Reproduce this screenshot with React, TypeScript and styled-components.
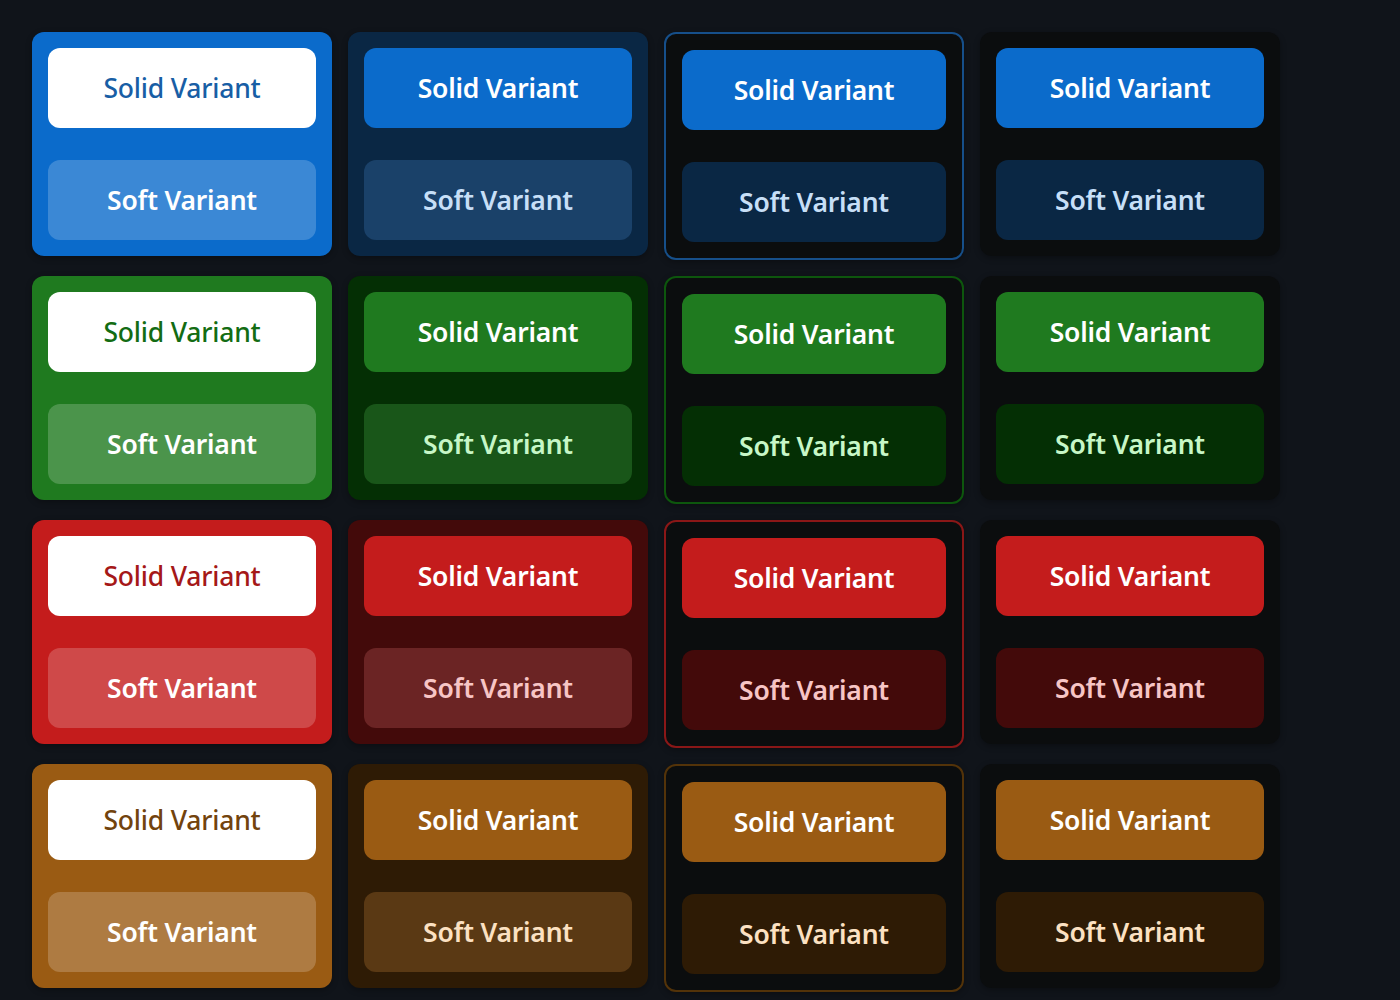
import React from 'react';
import styled, { createGlobalStyle, css } from 'styled-components';

type CardVariant = 'solid' | 'soft' | 'outlined' | 'plain';

interface Palette {
  name: string;
  main: string;
  dark: string;
  deep: string;
  border: string;
  softRaised: string;
  softText: string;
}

const palettes: Palette[] = [
  { name: 'primary', main: '#0b6bcb', dark: '#185ea5', deep: '#0a2744', border: '#164f8a', softRaised: '#1a4169', softText: '#c7dff7' },
  { name: 'success', main: '#1f7a1f', dark: '#136c13', deep: '#042f04', border: '#0d560d', softRaised: '#195619', softText: '#c7f7c7' },
  { name: 'danger', main: '#c41c1c', dark: '#a51818', deep: '#430a0a', border: '#8a1717', softRaised: '#6b2424', softText: '#f7c5c5' },
  { name: 'warning', main: '#9a5b13', dark: '#72430d', deep: '#2e1b05', border: '#533309', softRaised: '#5a3914', softText: '#fce1c2' },
];

const variants: CardVariant[] = ['solid', 'soft', 'outlined', 'plain'];

const GlobalStyle = createGlobalStyle`
  html, body {
    margin: 0;
    background: #10141a;
    font-family: "Noto Sans", "Open Sans", sans-serif;
  }
  * { box-sizing: border-box; }
`;

const Page = styled.div`
  padding: 32px;
  min-height: 1000px;
`;

const Grid = styled.div`
  display: grid;
  grid-template-columns: repeat(4, 300px);
  gap: 16px;
  align-items: start;
`;

const Card = styled.div<{ $variant: CardVariant; $p: Palette }>`
  display: flex;
  flex-direction: column;
  gap: 32px;
  padding: 16px;
  border-radius: 12px;
  box-shadow: 0 2px 6px rgba(0, 0, 0, 0.3);
  ${({ $variant, $p }) => {
    switch ($variant) {
      case 'solid':
        return css`background: ${$p.main};`;
      case 'soft':
        return css`background: ${$p.deep};`;
      case 'outlined':
        return css`
          background: #0b0d0e;
          border: 2px solid ${$p.border};
        `;
      default:
        return css`background: #0b0d0e;`;
    }
  }}
`;

const Button = styled.button<{ $kind: 'solid' | 'soft'; $card: CardVariant; $p: Palette }>`
  height: 80px;
  width: 100%;
  padding: 0 0 1px;
  border: none;
  border-radius: 12px;
  font-family: "Noto Sans", "Open Sans", sans-serif;
  font-size: 26.5px;
  font-weight: 600;
  letter-spacing: -0.2px;
  cursor: pointer;
  ${({ $kind, $card, $p }) => {
    if ($card === 'solid') {
      return $kind === 'solid'
        ? css`background: #ffffff; color: ${$p.dark}; font-weight: 500;`
        : css`background: rgba(255, 255, 255, 0.2); color: #ffffff;`;
    }
    if ($kind === 'solid') return css`background: ${$p.main}; color: #ffffff;`;
    if ($card === 'soft') return css`background: ${$p.softRaised}; color: ${$p.softText};`;
    return css`background: ${$p.deep}; color: ${$p.softText};`;
  }}
`;

function VariantCard({ variant, palette }: { variant: CardVariant; palette: Palette }) {
  return (
    <Card $variant={variant} $p={palette}>
      <Button $kind='solid' $card={variant} $p={palette}>
        Solid Variant
      </Button>
      <Button $kind='soft' $card={variant} $p={palette}>
        Soft Variant
      </Button>
    </Card>
  );
}

export default function App() {
  return (
    <Page>
      <GlobalStyle />
      <Grid>
        {palettes.map((p) =>
          variants.map((v) => <VariantCard key={p.name + v} variant={v} palette={p} />)
        )}
      </Grid>
    </Page>
  );
}
